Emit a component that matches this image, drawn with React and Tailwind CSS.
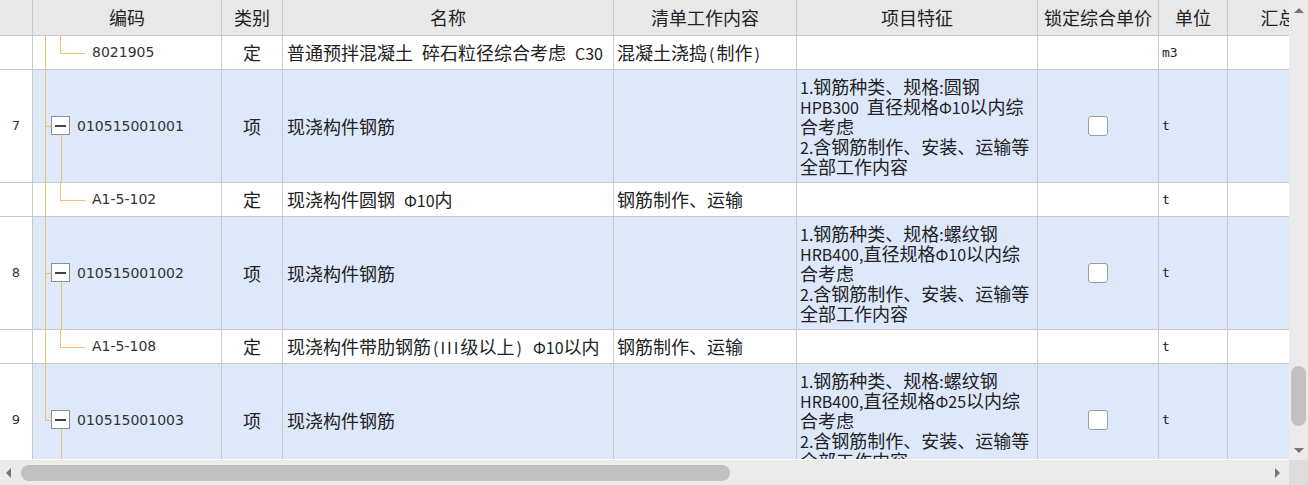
import React from 'react';

const CJK = "font-['Noto_Sans_CJK_SC',sans-serif]";
const BORDER = 'border-[#c9c9c9]';

// Latin runs inside the SimSun-like text are half width; same font keeps the baseline
function M({ children }) {
  return <span className="text-[16px]">{children}</span>;
}
// half-width bracket with some air around it, as in the reference
function P({ children }) {
  return <span className="text-[16px] mx-[2px]">{children}</span>;
}
const SP = '\u2002';

const COLS = [
  { w: 'w-[33px]', title: '' },
  { w: 'w-[189px]', title: '编码' },
  { w: 'w-[61px]', title: '类别' },
  { w: 'w-[331px]', title: '名称' },
  { w: 'w-[183px]', title: '清单工作内容' },
  { w: 'w-[241px]', title: '项目特征' },
  { w: 'w-[121px]', title: '锁定综合单价' },
  { w: 'w-[69px]', title: '单位' },
  { w: 'w-[120px]', title: '汇总价' },
];

const featureLines = (grade, size) => [
  <><M>1.</M>钢筋种类、规格<M>:</M>{grade === 'HPB300' ? '圆钢' : '螺纹钢'}</>,
  <><M>{grade}{grade === 'HPB300' ? SP : ','}</M>直径规格<M>Φ{size}</M>以内综</>,
  <>合考虑</>,
  <><M>2.</M>含钢筋制作、安装、运输等</>,
  <>全部工作内容</>,
];

const ROWS = [
  { kind: 'child', code: '8021905', type: '定', name: <>普通预拌混凝土{SP}碎石粒径综合考虑{SP}<M>C30</M></>, work: <>混凝土浇捣<P>(</P>制作<P>)</P></>, unit: 'm3' },
  { kind: 'parent', no: '7', code: '010515001001', type: '项', name: '现浇构件钢筋', features: featureLines('HPB300', '10'), unit: 't' },
  { kind: 'child', code: 'A1-5-102', type: '定', name: <>现浇构件圆钢{SP}<M>Φ10</M>内</>, work: '钢筋制作、运输', unit: 't' },
  { kind: 'parent', no: '8', code: '010515001002', type: '项', name: '现浇构件钢筋', features: featureLines('HRB400', '10'), unit: 't' },
  { kind: 'child', code: 'A1-5-108', type: '定', name: <>现浇构件带肋钢筋<P>(</P><span className="text-[16px] tracking-[2px]">III</span>级以上<P>)</P>{SP}<M>Φ10</M>以内</>, work: '钢筋制作、运输', unit: 't' },
  { kind: 'parent', no: '9', code: '010515001003', type: '项', name: '现浇构件钢筋', features: featureLines('HRB400', '25'), unit: 't', last: true },
];

function TreeCell({ row }) {
  const line = 'absolute bg-[#f5bd6e]';
  if (row.kind === 'child') {
    return (
      <div className="relative h-full">
        <div className={`${line} left-[12px] top-0 bottom-0 w-px`} />
        <div className={`${line} left-[27px] top-0 h-1/2 w-px`} />
        <div className={`${line} left-[27px] top-1/2 h-px w-[25px]`} />
        <div className="absolute left-[59px] top-0 bottom-0 flex items-center font-['DejaVu_Sans',sans-serif] text-[14px] text-[#333]">
          {row.code}
        </div>
      </div>
    );
  }
  return (
    <div className="relative h-full">
      <div className={`${line} left-[12px] top-0 w-px ${row.last ? 'h-1/2' : 'bottom-0'}`} />
      <div className={`${line} left-[12px] top-1/2 h-px w-[6px]`} />
      <div className={`${line} left-[28px] top-1/2 bottom-0 w-px`} />
      <div className="absolute left-[18px] top-1/2 -mt-[10px] w-[19px] h-[19px] bg-white border border-[#8f8f8f] flex items-center justify-center">
        <div className="w-[11px] h-[2px] bg-[#444]" />
      </div>
      <div className="absolute left-[44px] top-0 bottom-0 flex items-center font-['DejaVu_Sans',sans-serif] text-[14px] text-[#333]">
        {row.code}
      </div>
    </div>
  );
}

function Row({ row }) {
  const blue = row.kind === 'parent';
  const bg = blue ? 'bg-[#dde8fb]' : 'bg-white';
  const h = blue ? 'h-[113px]' : 'h-[34px]';
  const cell = `shrink-0 h-full border-r ${BORDER}`;
  return (
    <div className={`flex ${h} border-b ${BORDER} text-[18px] text-[#222] ${CJK}`}>
      <div className={`${cell} ${COLS[0].w} bg-white flex items-center justify-center font-['DejaVu_Sans',sans-serif] text-[13px] text-[#333]`}>
        {row.no}
      </div>
      <div className={`${cell} ${COLS[1].w} ${bg}`}>
        <TreeCell row={row} />
      </div>
      <div className={`${cell} ${COLS[2].w} ${bg} flex items-center justify-center`}>{row.type}</div>
      <div className={`${cell} ${COLS[3].w} ${bg} flex items-center pl-[4px] whitespace-nowrap`}>
        <span>{row.name}</span>
      </div>
      <div className={`${cell} ${COLS[4].w} ${bg} flex items-center pl-[3px] whitespace-nowrap`}>
        <span>{row.work}</span>
      </div>
      <div className={`${cell} ${COLS[5].w} ${bg} flex flex-col justify-center pl-[3px] whitespace-nowrap`}>
        {row.features && row.features.map((l, i) => <div key={i} className="h-[20px] leading-[20px]">{l}</div>)}
      </div>
      <div className={`${cell} ${COLS[6].w} ${bg} flex items-center justify-center`}>
        {blue && <div className="w-[20px] h-[20px] bg-white border border-[#9c9c9c] rounded-[3px]" />}
      </div>
      <div className={`${cell} ${COLS[7].w} ${bg} flex items-center pl-[3px] font-['DejaVu_Sans_Mono',monospace] text-[13px]`}>
        {row.unit}
      </div>
      <div className={`${cell} ${COLS[8].w} ${bg}`} />
    </div>
  );
}

export default function App() {
  return (
    <div className="w-[1308px] h-[485px] flex bg-white overflow-hidden">
      <div className="w-[1289px] flex flex-col">
        <div className="h-[460px] overflow-hidden">
          <div className={`flex h-[36px] border-b ${BORDER} bg-[#e8e8e8] text-[18px] text-[#222] ${CJK}`}>
            {COLS.map((c, i) => (
              <div key={i} className={`${c.w} shrink-0 h-full border-r ${BORDER} flex items-center justify-center whitespace-nowrap`}>
                {c.title}
              </div>
            ))}
          </div>
          {ROWS.map((r, i) => <Row key={i} row={r} />)}
        </div>
        <div className="h-[25px] mt-px bg-[#ebebeb] flex items-center">
          <div className="w-0 h-0 ml-[6px] border-y-[5px] border-y-transparent border-r-[5px] border-r-[#777]" />
          <div className="ml-[10px] w-[709px] h-[16px] rounded-full bg-[#c1c1c1]" />
          <div className="flex-1" />
          <div className="w-0 h-0 mr-[9px] border-y-[5px] border-y-transparent border-l-[5px] border-l-[#777]" />
        </div>
      </div>
      <div className="w-[19px] flex flex-col">
        <div className="h-[460px] bg-[#ebebeb] flex flex-col items-center">
          <div className="mt-[8px] w-0 h-0 border-x-[5px] border-x-transparent border-b-[5px] border-b-[#777]" />
          <div className="mt-[353px] w-[15px] h-[60px] rounded-full bg-[#c1c1c1]" />
          <div className="flex-1" />
          <div className="mb-[7px] w-0 h-0 border-x-[5px] border-x-transparent border-t-[5px] border-t-[#777]" />
        </div>
        <div className="flex-1 bg-[#dcdcdc]" />
      </div>
    </div>
  );
}
